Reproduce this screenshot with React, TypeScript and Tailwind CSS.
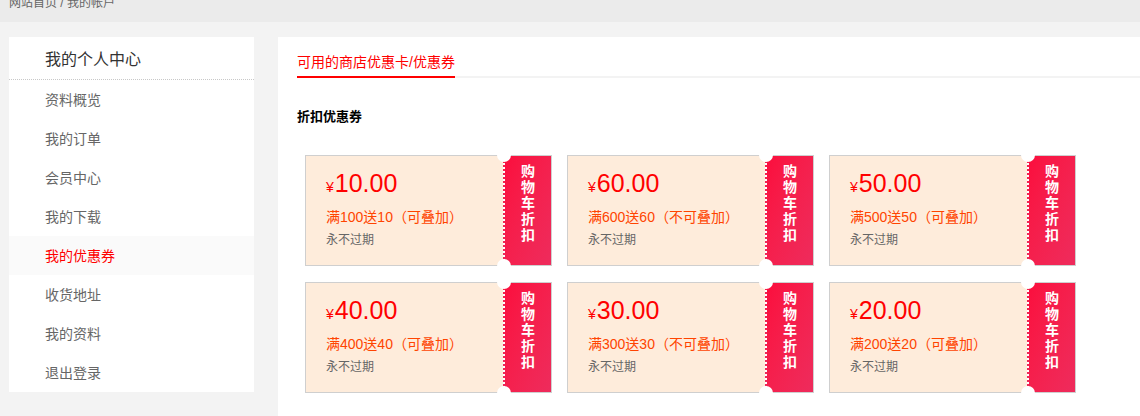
import React from "react";

const menu = ["资料概览", "我的订单", "会员中心", "我的下载", "我的优惠券", "收货地址", "我的资料", "退出登录"];

const coupons = [
  { price: "10.00", rule: "满100送10（可叠加）" },
  { price: "60.00", rule: "满600送60（不可叠加）" },
  { price: "50.00", rule: "满500送50（可叠加）" },
  { price: "40.00", rule: "满400送40（可叠加）" },
  { price: "30.00", rule: "满300送30（不可叠加）" },
  { price: "20.00", rule: "满200送20（可叠加）" },
];

function Coupon({ price, rule }: { price: string; rule: string }) {
  return (
    <div className="relative flex w-[247px] h-[111px] border border-[#cfcfcf] bg-[#feecdb]">
      <div className="flex-1 min-w-0 flex flex-col pl-[20px] pt-[12px]">
        <div className="flex items-baseline leading-[30px] text-[#ff0000]">
          <span className="text-[14px] mr-[1px]">¥</span>
          <span className="text-[25px]">{price}</span>
        </div>
        <div className="mt-[5px] text-[14px] leading-[20px] text-[#ff4400] whitespace-nowrap">{rule}</div>
        <div className="mt-[4px] text-[12px] leading-[18px] text-[#666]">永不过期</div>
      </div>
      <div className="relative shrink-0 w-[48px] h-full border-l-2 border-dotted border-white bg-linear-to-br from-[#fb0d3d] to-[#ee2b5c] flex flex-col items-center justify-center">
        <div className="flex flex-col items-center text-white font-bold text-[14px] leading-[16px] mt-[-16px]">
          <span>购</span>
          <span>物</span>
          <span>车</span>
          <span>折</span>
          <span>扣</span>
        </div>
      </div>
      <div className="absolute left-[191px] top-[-8px] w-[14px] h-[14px] rounded-full bg-white" />
      <div className="absolute left-[191px] bottom-[-8px] w-[14px] h-[14px] rounded-full bg-white" />
    </div>
  );
}

export default function App() {
  return (
    <div
      className="min-h-[416px] bg-[#f3f3f3]"
      style={{ fontFamily: '"Liberation Sans", "Noto Sans CJK SC", sans-serif' }}
    >
      <div className="h-[22px] bg-[#ebebeb] overflow-hidden px-[9px]">
        <div className="mt-[-5px] text-[12px] leading-[16px] text-[#666]">网站首页 / 我的帐户</div>
      </div>
      <div className="flex items-start gap-[24px] pl-[9px] pt-[15px]">
        <div className="w-[245px] bg-white shrink-0">
          <div className="h-[43px] pt-[4px] border-b border-dotted border-[#c8c8c8] pl-[36px] flex items-center text-[16px] text-[#333]">
            我的个人中心
          </div>
          {menu.map((m) => (
            <div
              key={m}
              className={
                m === "我的优惠券"
                  ? "h-[39px] pt-[2px] pl-[36px] flex items-center text-[14px] text-[#ff0000] bg-[#fafafa]"
                  : "h-[39px] pt-[2px] pl-[36px] flex items-center text-[14px] text-[#666]"
              }
            >
              {m}
            </div>
          ))}
        </div>
        <div className="flex-1 bg-white pl-[19px] pb-[40px]">
          <div className="border-b-2 border-[#f3f3f3] flex">
            <div className="mb-[-2px] border-b-2 border-[#ff0000] pt-[15px] pb-[4px] text-[14px] leading-[20px] text-[#ff0000]">
              可用的商店优惠卡/优惠券
            </div>
          </div>
          <div className="mt-[29px] text-[13px] leading-[20px] font-bold text-black">折扣优惠券</div>
          <div className="mt-[28px] ml-[8px] flex flex-wrap gap-x-[15px] gap-y-[16px] w-[780px]">
            {coupons.map((c) => (
              <Coupon key={c.price} price={c.price} rule={c.rule} />
            ))}
          </div>
        </div>
      </div>
    </div>
  );
}
